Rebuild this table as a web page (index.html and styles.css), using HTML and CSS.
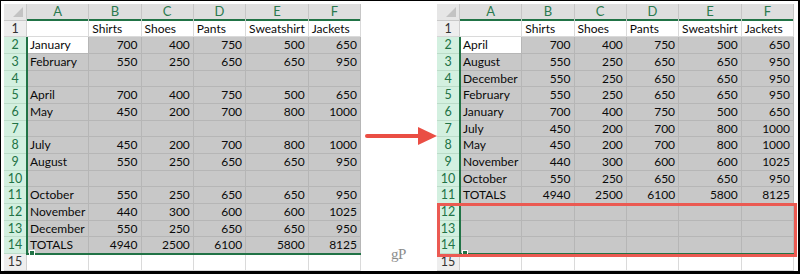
FILE: index.html
```html
<!DOCTYPE html>
<html>
<head>
<meta charset="utf-8">
<link rel="stylesheet" href="styles.css">
</head>
<body>
<div class="frame">
  <div class="sheet">
    <div class="corner"></div><div class="ch">A</div><div class="ch">B</div><div class="ch">C</div><div class="ch">D</div><div class="ch">E</div><div class="ch">F</div>
    <div class="rh">1</div><div class="c"></div><div class="c">Shirts</div><div class="c">Shoes</div><div class="c">Pants</div><div class="c">Sweatshirt</div><div class="c">Jackets</div>
    <div class="rh on">2</div><div class="c act">January</div><div class="c s n">700</div><div class="c s n">400</div><div class="c s n">750</div><div class="c s n">500</div><div class="c s n">650</div>
    <div class="rh on">3</div><div class="c s">February</div><div class="c s n">550</div><div class="c s n">250</div><div class="c s n">650</div><div class="c s n">650</div><div class="c s n">950</div>
    <div class="rh on">4</div><div class="c s"></div><div class="c s"></div><div class="c s"></div><div class="c s"></div><div class="c s"></div><div class="c s"></div>
    <div class="rh on">5</div><div class="c s">April</div><div class="c s n">700</div><div class="c s n">400</div><div class="c s n">750</div><div class="c s n">500</div><div class="c s n">650</div>
    <div class="rh on">6</div><div class="c s">May</div><div class="c s n">450</div><div class="c s n">200</div><div class="c s n">700</div><div class="c s n">800</div><div class="c s n">1000</div>
    <div class="rh on">7</div><div class="c s"></div><div class="c s"></div><div class="c s"></div><div class="c s"></div><div class="c s"></div><div class="c s"></div>
    <div class="rh on">8</div><div class="c s">July</div><div class="c s n">450</div><div class="c s n">200</div><div class="c s n">700</div><div class="c s n">800</div><div class="c s n">1000</div>
    <div class="rh on">9</div><div class="c s">August</div><div class="c s n">550</div><div class="c s n">250</div><div class="c s n">650</div><div class="c s n">650</div><div class="c s n">950</div>
    <div class="rh on">10</div><div class="c s"></div><div class="c s"></div><div class="c s"></div><div class="c s"></div><div class="c s"></div><div class="c s"></div>
    <div class="rh on">11</div><div class="c s">October</div><div class="c s n">550</div><div class="c s n">250</div><div class="c s n">650</div><div class="c s n">650</div><div class="c s n">950</div>
    <div class="rh on">12</div><div class="c s">November</div><div class="c s n">440</div><div class="c s n">300</div><div class="c s n">600</div><div class="c s n">600</div><div class="c s n">1025</div>
    <div class="rh on">13</div><div class="c s">December</div><div class="c s n">550</div><div class="c s n">250</div><div class="c s n">650</div><div class="c s n">650</div><div class="c s n">950</div>
    <div class="rh on">14</div><div class="c s">TOTALS</div><div class="c s n">4940</div><div class="c s n">2500</div><div class="c s n">6100</div><div class="c s n">5800</div><div class="c s n">8125</div>
    <div class="rh">15</div><div class="c"></div><div class="c"></div><div class="c"></div><div class="c"></div><div class="c"></div><div class="c"></div>
    <div class="selbox"></div>
  </div>

  <div class="arrow">
    <svg width="76" height="20" viewBox="0 0 76 20">
      <line x1="6" y1="10" x2="60" y2="10" stroke="#ea4e44" stroke-width="4" stroke-linecap="round"/>
      <polygon points="57,1 76,10 57,19" fill="#ea4e44"/>
    </svg>
  </div>

  <div class="sheet">
    <div class="corner"></div><div class="ch">A</div><div class="ch">B</div><div class="ch">C</div><div class="ch">D</div><div class="ch">E</div><div class="ch">F</div>
    <div class="rh">1</div><div class="c"></div><div class="c">Shirts</div><div class="c">Shoes</div><div class="c">Pants</div><div class="c">Sweatshirt</div><div class="c">Jackets</div>
    <div class="rh on">2</div><div class="c act">April</div><div class="c s n">700</div><div class="c s n">400</div><div class="c s n">750</div><div class="c s n">500</div><div class="c s n">650</div>
    <div class="rh on">3</div><div class="c s">August</div><div class="c s n">550</div><div class="c s n">250</div><div class="c s n">650</div><div class="c s n">650</div><div class="c s n">950</div>
    <div class="rh on">4</div><div class="c s">December</div><div class="c s n">550</div><div class="c s n">250</div><div class="c s n">650</div><div class="c s n">650</div><div class="c s n">950</div>
    <div class="rh on">5</div><div class="c s">February</div><div class="c s n">550</div><div class="c s n">250</div><div class="c s n">650</div><div class="c s n">650</div><div class="c s n">950</div>
    <div class="rh on">6</div><div class="c s">January</div><div class="c s n">700</div><div class="c s n">400</div><div class="c s n">750</div><div class="c s n">500</div><div class="c s n">650</div>
    <div class="rh on">7</div><div class="c s">July</div><div class="c s n">450</div><div class="c s n">200</div><div class="c s n">700</div><div class="c s n">800</div><div class="c s n">1000</div>
    <div class="rh on">8</div><div class="c s">May</div><div class="c s n">450</div><div class="c s n">200</div><div class="c s n">700</div><div class="c s n">800</div><div class="c s n">1000</div>
    <div class="rh on">9</div><div class="c s">November</div><div class="c s n">440</div><div class="c s n">300</div><div class="c s n">600</div><div class="c s n">600</div><div class="c s n">1025</div>
    <div class="rh on">10</div><div class="c s">October</div><div class="c s n">550</div><div class="c s n">250</div><div class="c s n">650</div><div class="c s n">650</div><div class="c s n">950</div>
    <div class="rh on">11</div><div class="c s">TOTALS</div><div class="c s n">4940</div><div class="c s n">2500</div><div class="c s n">6100</div><div class="c s n">5800</div><div class="c s n">8125</div>
    <div class="rh on">12</div><div class="c s"></div><div class="c s"></div><div class="c s"></div><div class="c s"></div><div class="c s"></div><div class="c s"></div>
    <div class="rh on">13</div><div class="c s"></div><div class="c s"></div><div class="c s"></div><div class="c s"></div><div class="c s"></div><div class="c s"></div>
    <div class="rh on">14</div><div class="c s"></div><div class="c s"></div><div class="c s"></div><div class="c s"></div><div class="c s"></div><div class="c s"></div>
    <div class="rh">15</div><div class="c"></div><div class="c"></div><div class="c"></div><div class="c"></div><div class="c"></div><div class="c"></div>
    <div class="selbox"></div>
    <div class="highlight"></div>
  </div>

  <div class="watermark">gP</div>
</div>
</body>
</html>
```

FILE: styles.css
```css
* { box-sizing: border-box; }
html, body { margin: 0; padding: 0; background: #fff; }

.frame {
  position: relative;
  width: 800px;
  height: 274px;
  border-style: solid;
  border-color: #000;
  border-width: 1px 2px 3px 1px;
  padding: 3px 0 0 3px;
  display: flex;
  align-items: flex-start;
  overflow: hidden;
  font-family: Lato, "Liberation Sans", sans-serif;
  font-size: 12px;
  color: #0a0a0a;
}

.sheet {
  position: relative;
  width: 357px;
  flex: none;
  display: grid;
  grid-template-columns: 23px repeat(6, 1fr);
  grid-template-rows: 17px 16px repeat(4, 17px 17px 16px) 17px 17px;
  background: #fff;
}

.corner {
  position: relative;
  background: #e6e6e6;
  border-right: 1px solid #c9c9c9;
  border-bottom: 1px solid #c9c9c9;
}
.corner::after {
  content: "";
  position: absolute;
  right: 3px;
  bottom: 3px;
  border-style: solid;
  border-width: 0 0 10px 10px;
  border-color: transparent transparent #c3c3c3 transparent;
}

.ch {
  background: #dedede;
  color: #2b7a4f;
  font-size: 13px;
  text-align: center;
  line-height: 15px;
  border-right: 1px solid #c6c6c6;
  box-shadow: inset 0 -2px 0 #217346;
}

.rh {
  background: #eeeeee;
  color: #333;
  text-align: center;
  line-height: 16px;
  font-size: 12.5px;
  border-right: 1px solid #cfcfcf;
  border-bottom: 1px solid #d6d6d6;
}
.rh.on {
  background: #d3f0e0;
  color: #217346;
  border-bottom-color: #bcdcc9;
}

.c {
  white-space: nowrap;
  overflow: visible;
  padding: 0 3px;
  line-height: 16px;
  border-right: 1px solid #dadada;
  border-bottom: 1px solid #dadada;
}
.c.s {
  background: #c8c8c8;
  border-right-color: #b6b6b6;
  border-bottom-color: #b6b6b6;
}
.c.act {
  background: #fff;
  border-right-color: #b6b6b6;
  border-bottom-color: #b6b6b6;
}
.c.n { text-align: right; }

.selbox {
  position: absolute;
  left: 22px;
  top: 33px;
  width: 335px;
  height: 218px;
  border-left: 2px solid #217346;
  border-bottom: 2px solid #217346;
  pointer-events: none;
}
.selbox::after {
  content: "";
  position: absolute;
  left: 1px;
  bottom: -3px;
  width: 4px;
  height: 4px;
  background: #217346;
  border: 1px solid #fff;
}

.arrow {
  width: 76px;
  flex: none;
  align-self: center;
  display: flex;
  margin-top: -3px;
}
.arrow svg { display: block; }

.highlight {
  position: absolute;
  left: 0;
  top: 199px;
  width: 360px;
  height: 54px;
  border: 3px solid #eb5a52;
  pointer-events: none;
}

.watermark {
  position: absolute;
  left: 390px;
  top: 245px;
  font-family: "Liberation Serif", "DejaVu Serif", serif;
  font-size: 15px;
  color: #8c8c8c;
  letter-spacing: -0.5px;
}
```
